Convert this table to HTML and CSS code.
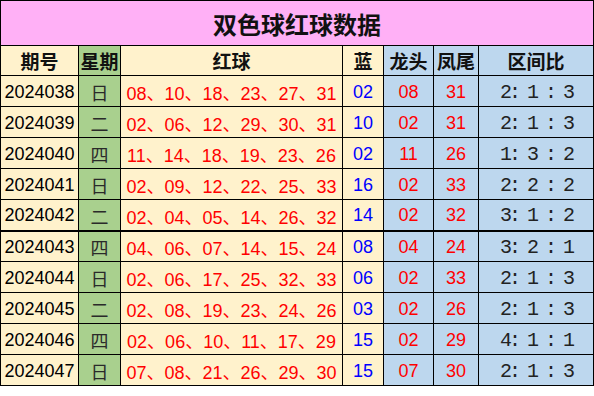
FILE: index.html
```html
<!DOCTYPE html>
<html lang="zh">
<head>
<meta charset="utf-8">
<link rel="stylesheet" href="styles.css">
</head>
<body>
<table class="sheet">
  <colgroup>
    <col class="c-qi"><col class="c-wk"><col class="c-red"><col class="c-blue"><col class="c-lt"><col class="c-fw"><col class="c-ratio">
  </colgroup>
  <tr class="title-row"><td colspan="7" class="title">双色球红球数据</td></tr>
  <tr class="head-row">
    <td class="h cream">期号</td>
    <td class="h green">星期</td>
    <td class="h cream">红球</td>
    <td class="h cream">蓝</td>
    <td class="h blue-bg">龙头</td>
    <td class="h blue-bg">凤尾</td>
    <td class="h blue-bg">区间比</td>
  </tr>
  <tr class="row"><td class="cream qi">2024038</td><td class="green wk">日</td><td class="cream red">08、10、18、23、27、31</td><td class="cream bl">02</td><td class="blue-bg red">08</td><td class="blue-bg red">31</td><td class="blue-bg ratio">2:  1 : 3</td></tr>
  <tr class="row"><td class="cream qi">2024039</td><td class="green wk">二</td><td class="cream red">02、06、12、29、30、31</td><td class="cream bl">10</td><td class="blue-bg red">02</td><td class="blue-bg red">31</td><td class="blue-bg ratio">2:  1 : 3</td></tr>
  <tr class="row"><td class="cream qi">2024040</td><td class="green wk">四</td><td class="cream red">11、14、18、19、23、26</td><td class="cream bl">02</td><td class="blue-bg red">11</td><td class="blue-bg red">26</td><td class="blue-bg ratio">1:  3 : 2</td></tr>
  <tr class="row"><td class="cream qi">2024041</td><td class="green wk">日</td><td class="cream red">02、09、12、22、25、33</td><td class="cream bl">16</td><td class="blue-bg red">02</td><td class="blue-bg red">33</td><td class="blue-bg ratio">2:  2 : 2</td></tr>
  <tr class="row split"><td class="cream qi">2024042</td><td class="green wk">二</td><td class="cream red">02、04、05、14、26、32</td><td class="cream bl">14</td><td class="blue-bg red">02</td><td class="blue-bg red">32</td><td class="blue-bg ratio">3:  1 : 2</td></tr>
  <tr class="row"><td class="cream qi">2024043</td><td class="green wk">四</td><td class="cream red">04、06、07、14、15、24</td><td class="cream bl">08</td><td class="blue-bg red">04</td><td class="blue-bg red">24</td><td class="blue-bg ratio">3:  2 : 1</td></tr>
  <tr class="row"><td class="cream qi">2024044</td><td class="green wk">日</td><td class="cream red">02、06、17、25、32、33</td><td class="cream bl">06</td><td class="blue-bg red">02</td><td class="blue-bg red">33</td><td class="blue-bg ratio">2:  1 : 3</td></tr>
  <tr class="row"><td class="cream qi">2024045</td><td class="green wk">二</td><td class="cream red">02、08、19、23、24、26</td><td class="cream bl">03</td><td class="blue-bg red">02</td><td class="blue-bg red">26</td><td class="blue-bg ratio">2:  1 : 3</td></tr>
  <tr class="row"><td class="cream qi">2024046</td><td class="green wk">四</td><td class="cream red">02、06、10、11、17、29</td><td class="cream bl">15</td><td class="blue-bg red">02</td><td class="blue-bg red">29</td><td class="blue-bg ratio">4:  1 : 1</td></tr>
  <tr class="row"><td class="cream qi">2024047</td><td class="green wk">日</td><td class="cream red">07、08、21、26、29、30</td><td class="cream bl">15</td><td class="blue-bg red">07</td><td class="blue-bg red">30</td><td class="blue-bg ratio">2:  1 : 3</td></tr>
</table>
</body>
</html>
```

FILE: styles.css
```css
html, body {
  margin: 0;
  padding: 0;
  background: #ffffff;
}

.sheet {
  border-collapse: collapse;
  table-layout: fixed;
  width: 593px;
  font-family: "Liberation Sans", "Noto Sans CJK SC", sans-serif;
  font-size: 18px;
}

.c-qi { width: 78px; }
.c-wk { width: 42px; }
.c-red { width: 222px; }
.c-blue { width: 41px; }
.c-lt { width: 50px; }
.c-fw { width: 45px; }
.c-ratio { width: 115px; }

.sheet td {
  border: 1px solid #000000;
  padding: 0;
  text-align: center;
  vertical-align: middle;
  white-space: nowrap;
  overflow: hidden;
}

.title-row td { height: 44px; }
.head-row td { height: 29px; }
.row td { height: 31px; padding-top: 2px; box-sizing: border-box; }

.split td { border-bottom: 2px solid #000000; }

.title {
  background: #ffb0f6;
  font-family: "Noto Sans CJK SC", sans-serif;
  font-weight: 700;
  font-size: 24px;
  color: #111111;
  padding-top: 2px;
}

.h {
  font-family: "Noto Sans CJK SC", sans-serif;
  font-weight: 700;
  font-size: 19px;
  color: #111111;
}

.cream { background: #fff2cc; }
.green { background: #a9d08e; }
.blue-bg { background: #bdd7ee; }

.qi { color: #000000; }

.wk {
  font-family: "Noto Sans CJK SC", sans-serif;
  font-size: 18px;
  color: #2a2a2a;
}

.red { color: #ff0000; }
.bl { color: #0000ff; }

.ratio {
  font-family: "Liberation Mono", "DejaVu Sans Mono", monospace;
  font-size: 20px;
  letter-spacing: -3px;
  color: #222222;
  white-space: pre;
  padding-left: 3px;
}
```
